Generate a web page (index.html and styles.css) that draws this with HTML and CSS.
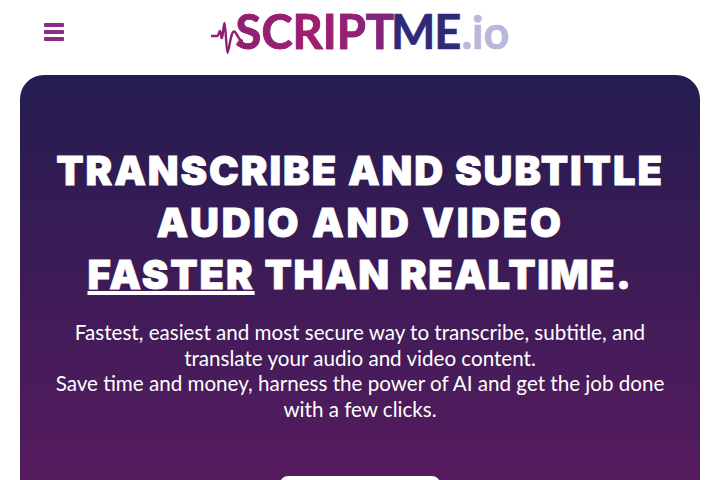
FILE: index.html
```html
<!DOCTYPE html>
<html lang="en">
<head>
<meta charset="utf-8">
<title>ScriptMe</title>
<link rel="stylesheet" href="styles.css">
</head>
<body>
<header class="topbar">
  <button class="menu" aria-label="Menu"><span></span><span></span><span></span></button>
  <div class="logo">
    <svg class="wave" width="32" height="44" viewBox="0 0 32 44" aria-hidden="true"><path d="M0.500 24H6.500C7.500 24 8 19 9 19S10 27 11 26 12.500 11 13.500 11 15.500 41 16.500 41 19 27 21 22 24 20 26 23 29 29 32 29" fill="none" stroke="#8e1f74" stroke-width="2.400" stroke-linejoin="round" stroke-linecap="round"/></svg>
    <span class="logo-a">SCRIPT</span><span class="logo-b">ME</span><span class="logo-c">.io</span>
  </div>
</header>
<main class="hero">
  <h1>TRANSCRIBE AND SUBTITLE<br><span class="line-wide">AUDIO AND VIDEO</span><br><u>FASTER</u> <span class="line-tight">THAN REALTIME.</span></h1>
  <p>Fastest, easiest and most secure way to transcribe, subtitle, and translate your audio and video content.<br>Save time and money, harness the power of AI and get the job done with a few clicks.</p>
  <div class="cta"></div>
</main>
</body>
</html>
```
FILE: styles.css
```css
html, body { margin: 0; padding: 0; height: 480px; overflow: hidden; background: #fff; }
body { font-family: "Lato", sans-serif; }
.topbar { height: 75px; position: relative; display: flex; justify-content: center; }
.menu { position: absolute; left: 44px; top: 23px; width: 20px; height: 18px; padding: 0; border: 0; background: none; display: flex; flex-direction: column; justify-content: space-between; }
.menu span { display: block; height: 4px; border-radius: 1px; background: #8e2a83; }
.logo { display: flex; align-items: baseline; height: 64px; margin-left: -2px; padding-top: 3px; font-family: "Lato", sans-serif; font-weight: 700; font-size: 47px; line-height: 56px; -webkit-text-stroke: 0.7px; }
.wave { align-self: flex-start; margin: 9px -7px 0 2px; flex: none; }
.logo-a { background: linear-gradient(90deg, #8e1f74, #a01e70 50%, #7b2680); -webkit-background-clip: text; background-clip: text; color: transparent; -webkit-text-stroke-color: #971f72; }
.logo-b { color: #2f2a78; margin-left: -3px; letter-spacing: -1px; -webkit-text-stroke-color: #2f2a78; }
.logo-c { color: #b9b7dc; font-size: 45px; margin-left: 1px; -webkit-text-stroke-color: #b9b7dc; }
.hero { margin: 0 20px; height: 405px; overflow: hidden; box-sizing: border-box; border-radius: 24px 24px 0 0; padding-top: 70px; background: linear-gradient(180deg, #241c50 0%, #561b5e 100%); color: #fff; text-align: center; }
h1 { margin: 0; font-family: "Inter", sans-serif; font-weight: 900; font-size: 40px; letter-spacing: 1.9px; line-height: 52px; -webkit-text-stroke: 0.8px #fff; paint-order: stroke fill; }
.line-wide { letter-spacing: 2.7px; }
.line-tight { letter-spacing: 1.5px; }
p { margin: 19px 30px 0; font-family: "Lato", sans-serif; font-size: 20.6px; line-height: 25.7px; }
.cta { width: 160px; height: 30px; margin: 53px auto 0; border-radius: 8px; background: #fff; }
```
